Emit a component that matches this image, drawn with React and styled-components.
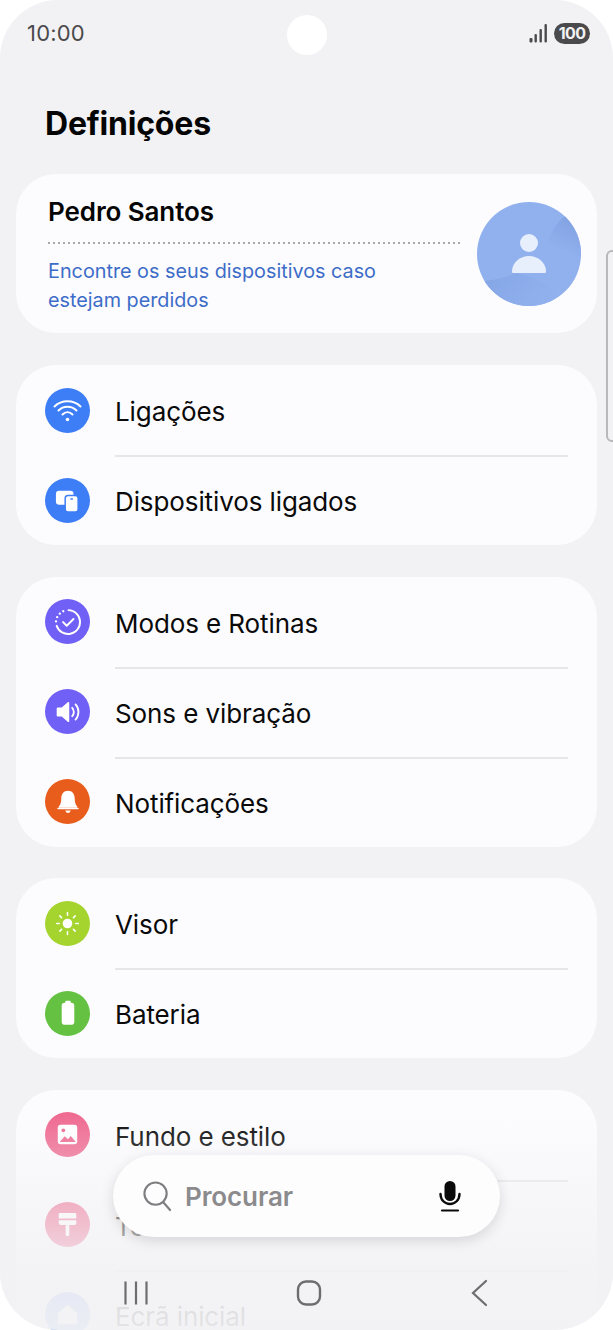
import React from "react";
import styled, { createGlobalStyle } from "styled-components";

const Global = createGlobalStyle`
  html, body { margin: 0; padding: 0; background: #fff; }
  #root { width: 613px; height: 1330px; }
  * { box-sizing: border-box; }
`;

const Screen = styled.div`
  position: relative;
  width: 613px;
  height: 1330px;
  overflow: hidden;
  background: #f2f2f4;
  border-radius: 58px;
  font-family: Inter, "Noto Sans", sans-serif;
  color: #0a0a0a;
  padding: 0 16px;
`;

const StatusBar = styled.div`
  height: 66px;
  display: flex;
  align-items: center;
  justify-content: space-between;
  padding: 0 7px 0 11px;
`;

const Clock = styled.span`
  font-size: 22px;
  color: #4a4a4c;
  letter-spacing: 0.2px;
`;

const StatusRight = styled.div`
  display: flex;
  align-items: center;
  gap: 5px;
`;

const BatteryBadge = styled.span`
  width: 36px;
  height: 21px;
  border-radius: 11px;
  background: #4a4a4c;
  color: #f2f2f4;
  font-size: 16px;
  font-weight: 700;
  letter-spacing: -0.6px;
  display: flex;
  align-items: center;
  justify-content: center;
`;

const Camera = styled.div`
  position: absolute;
  left: 287px;
  top: 15px;
  width: 40px;
  height: 40px;
  border-radius: 50%;
  background: #fff;
`;

const Title = styled.h1`
  margin: 0;
  height: 108px;
  padding: 37px 0 0 29px;
  font-size: 32px;
  line-height: 42px;
  font-weight: 700;
  letter-spacing: -0.2px;
  color: #050505;
`;

const Card = styled.section`
  background: #fcfcfe;
  border-radius: 40px;
  margin-bottom: 32.5px;
`;

const ProfileCard = styled(Card)`
  height: 159px;
  display: flex;
  align-items: center;
  padding: 0 16px 0 32px;
  margin-bottom: 33px;
`;

const ProfileText = styled.div`
  flex: 1;
  min-width: 0;
  margin-right: 17px;
  align-self: flex-start;
  margin-top: 23px;
`;

const ProfileName = styled.div`
  font-size: 26px;
  line-height: 30px;
  font-weight: 600;
  letter-spacing: -0.1px;
  color: #050505;
`;

const DottedRule = styled.div`
  height: 2px;
  margin-top: 15px;
  background: repeating-linear-gradient(to right, #a9a9ad 0 2px, transparent 2px 5px);
`;

const ProfileLink = styled.div`
  margin-top: 13px;
  font-size: 19.8px;
  line-height: 29px;
  color: #3d6cc8;
`;

const Avatar = styled.div`
  width: 104px;
  height: 104px;
  flex: none;
`;

const Row = styled.div`
  display: flex;
  align-items: center;
  height: 90px;
  padding-left: 29px;
  &:first-child {
    margin-top: -1px;
  }
`;

const IconCircle = styled.div`
  width: 45px;
  height: 45px;
  border-radius: 50%;
  background: ${(p) => p.$color};
  flex: none;
  display: flex;
  align-items: center;
  justify-content: center;
  margin-right: 25px;
`;

const RowBody = styled.div`
  flex: 1;
  align-self: stretch;
  display: flex;
  align-items: center;
  margin-right: 29px;
  font-size: 26px;
  letter-spacing: -0.1px;
  color: #0a0a0a;
  border-top: ${(p) => (p.$first ? "none" : "2px solid #e6e6e9")};
  padding-top: ${(p) => (p.$first ? 3 : 1)}px;
`;

const Fade = styled.div`
  position: absolute;
  left: 0;
  right: 0;
  bottom: 0;
  height: 215px;
  background: linear-gradient(
    to bottom,
    rgba(242, 242, 244, 0) 0%,
    rgba(242, 242, 244, 0.4) 30%,
    rgba(242, 242, 244, 0.62) 51%,
    rgba(242, 242, 244, 0.88) 72%,
    rgba(242, 242, 244, 0.94) 100%
  );
`;

const SearchPill = styled.div`
  position: absolute;
  left: 113px;
  top: 1155px;
  width: 387px;
  height: 82px;
  border-radius: 41px;
  background: #fdfdfe;
  box-shadow: 0 4px 14px rgba(0, 0, 0, 0.13);
  display: flex;
  align-items: center;
  padding: 0 38px 0 29px;
`;

const SearchText = styled.span`
  flex: 1;
  margin-left: 13px;
  font-size: 26px;
  font-weight: 600;
  letter-spacing: -0.1px;
  color: #8b8b8d;
`;

const NavBar = styled.nav`
  position: absolute;
  left: 0;
  right: 0;
  top: 1279px;
  height: 28px;
  display: flex;
  align-items: center;
  justify-content: space-between;
  padding: 0 123px 0 124px;
`;

const ScrollHandle = styled.div`
  position: absolute;
  left: 606px;
  top: 250px;
  width: 20px;
  height: 192px;
  border: 2px solid #b9b9bb;
  border-radius: 6px;
`;

const WifiIcon = () => (
  <svg width="29" height="29" viewBox="0 0 29 29" fill="none" stroke="#fff" strokeWidth="2" strokeLinecap="round">
    <path d="M1.5 10.5C8.5 3.5 20.5 3.5 27.5 10.5" />
    <path d="M5.5 14.5C10.5 9.500 18.500 9.500 23.500 14.500" />
    <path d="M9.500 18.500C12.500 15.500 16.500 15.500 19.500 18.500" />
    <circle cx="14.500" cy="23.500" r="1.800" fill="#fff" stroke="none" />
  </svg>
);

const DevicesIcon = () => (
  <svg width="25" height="25" viewBox="0 0 27 27">
    <rect x="1" y="3" width="19" height="15" rx="3.500" fill="#fff" />
    <rect x="11" y="8" width="14" height="18" rx="3" fill="#fff" stroke="#3d7df6" strokeWidth="1.600" />
    <rect x="16.500" y="11" width="3" height="1.600" rx="0.800" fill="#3d7df6" />
  </svg>
);

const RoutineIcon = () => (
  <svg width="28" height="28" viewBox="0 0 29 29" fill="none" stroke="#fff" strokeWidth="2" strokeLinecap="round" strokeLinejoin="round">
    <path d="M15 2.200A12.400 12.400 0 1 1 2.800 18.500" />
    <path d="M2.100 13.800v.1M3.300 9.400v.1M6 5.800v.1M9.600 3.300v.1" strokeWidth="2.400" />
    <path d="M9.400 14.600l3.800 3.800 7-7" />
  </svg>
);

const SoundIcon = () => (
  <svg width="26" height="26" viewBox="0 0 31 31" fill="none">
    <path d="M2 11.500c0-.8.6-1.500 1.500-1.500H8l7.500-6.300c.7-.6 1.500-.1 1.500.8v22c0 .9-.8 1.400-1.500.8L8 21H3.500C2.600 21 2 20.300 2 19.500z" fill="#fff" />
    <path d="M20.500 10.500c2.600 2.800 2.600 7.200 0 10M24.500 6.500c4.600 5 4.600 13 0 18" stroke="#fff" strokeWidth="2.200" strokeLinecap="round" />
  </svg>
);

const BellIcon = () => (
  <svg width="26" height="26" viewBox="0 0 29 29" fill="#fff">
    <path d="M14.500 2C9.500 2 7 6 7 10.500c0 4-.8 6.500-2.400 8.500-.7.900-.7 2 .6 2h18.600c1.300 0 1.300-1.100.6-2C22.800 17 22 14.500 22 10.500 22 6 19.500 2 14.500 2z" />
    <rect x="2.500" y="21" width="24" height="1.600" rx="0.800" />
    <path d="M11.500 24h6c-.5 1.900-1.700 2.800-3 2.800s-2.500-.9-3-2.800z" />
  </svg>
);

const SunIcon = () => (
  <svg width="27" height="27" viewBox="0 0 31 31" fill="none" stroke="#fff" strokeWidth="1.800" strokeLinecap="round">
    <circle cx="15.500" cy="15.500" r="5.500" fill="#fff" stroke="none" />
    <path d="M15.500 3v3M15.500 25v3M3 15.500h3M25 15.500h3M6.700 6.700l2 2M22.300 22.300l2 2M6.700 24.300l2-2M22.300 8.700l2-2" />
  </svg>
);

const BatteryIcon = () => (
  <svg width="22" height="26" viewBox="0 0 27 33" fill="#fff">
    <rect x="10" y="1" width="7" height="4" rx="1.200" />
    <rect x="5.500" y="3.500" width="16" height="28" rx="4" />
  </svg>
);

const PictureIcon = () => (
  <svg width="25" height="25" viewBox="0 0 27 27">
    <rect x="3" y="3" width="21" height="21" rx="3" fill="#fff" />
    <circle cx="9" cy="9" r="2" fill="#ef6b92" />
    <path d="M5 21.500l5.500-6 3.500 3 3-3.500 5.500 6.500z" fill="#ef6b92" />
  </svg>
);

const BrushIcon = () => (
  <svg width="25" height="27" viewBox="0 0 27 29" fill="#fff">
    <path d="M4 3.500c0-.8.700-1.500 1.500-1.500h16c.8 0 1.500.7 1.500 1.500V8H4z" />
    <path d="M4 10h19v2.500c0 1.400-1.100 2.500-2.500 2.500H6.500A2.500 2.500 0 0 1 4 12.500z" />
    <rect x="11.500" y="15" width="4" height="12" rx="1.500" />
  </svg>
);

const HomeIcon = () => (
  <svg width="25" height="25" viewBox="0 0 27 27" fill="#fff">
    <path d="M13.500 3L24 12.500V24H3V12.500z" />
  </svg>
);

const SearchIcon = () => (
  <svg width="30" height="32" viewBox="0 0 31 33" fill="none" stroke="#7e7e80" strokeWidth="2.200" strokeLinecap="round">
    <circle cx="14" cy="14" r="11.500" />
    <path d="M22 23l7 8" />
  </svg>
);

const MicIcon = () => (
  <svg width="24" height="32" viewBox="0 0 24 32" fill="none">
    <rect x="6.500" y="1" width="11" height="20" rx="5.500" fill="#0a0a0a" />
    <path d="M2.500 14c0 6 4.400 10 9.500 10s9.500-4 9.500-10" stroke="#0a0a0a" strokeWidth="2.400" strokeLinecap="round" />
    <path d="M4 30.500h16" stroke="#0a0a0a" strokeWidth="2.200" strokeLinecap="round" />
  </svg>
);

const Signal = () => (
  <svg width="20" height="20" viewBox="0 0 20 20" fill="#4a4a4c">
    <rect x="0.500" y="15" width="3" height="4.500" rx="1" />
    <rect x="5.500" y="11" width="2.400" height="8.500" rx="1" />
    <rect x="10.500" y="6" width="2.400" height="13.500" rx="1" />
    <rect x="15.500" y="1" width="2.400" height="18.500" rx="1" />
  </svg>
);

const ProfileAvatar = () => (
  <svg width="104" height="104" viewBox="0 0 104 104">
    <defs>
      <clipPath id="avatarClip">
        <circle cx="52" cy="52" r="52" />
      </clipPath>
      <linearGradient id="wedge" x1="1" y1="0" x2="0.600" y2="1">
        <stop offset="0" stopColor="#7f9fe0" />
        <stop offset="1" stopColor="#91b1ee" />
      </linearGradient>
      <linearGradient id="lower" x1="0" y1="0" x2="1" y2="0.400">
        <stop offset="0" stopColor="#84a5e5" />
        <stop offset="1" stopColor="#91b1ee" />
      </linearGradient>
    </defs>
    <g clipPath="url(#avatarClip)">
      <rect width="104" height="104" fill="#91b1ee" />
      <path d="M88 14C78 22 73 32 70 43 82 47 94 50 106 56V14z" fill="url(#wedge)" />
      <path d="M4 79C18 78 30 75 38 71 56 74 70 82 84 92L60 110H0z" fill="url(#lower)" />
      <circle cx="52" cy="41" r="9" fill="#e8effc" />
      <path d="M35 69.500c0-9 8-15.500 17-15.500s17 6.500 17 15.500c0 1-.7 1.500-1.500 1.500h-31c-.8 0-1.500-.5-1.500-1.500z" fill="#e8effc" />
    </g>
  </svg>
);

const groups = [
  [
    { label: "Ligações", color: "#3d7df6", icon: <WifiIcon /> },
    { label: "Dispositivos ligados", color: "#3d7df6", icon: <DevicesIcon /> },
  ],
  [
    { label: "Modos e Rotinas", color: "#7160f5", icon: <RoutineIcon /> },
    { label: "Sons e vibração", color: "#7160f5", icon: <SoundIcon /> },
    { label: "Notificações", color: "#e85c1c", icon: <BellIcon /> },
  ],
  [
    { label: "Visor", color: "#a5d42e", icon: <SunIcon /> },
    { label: "Bateria", color: "#64c141", icon: <BatteryIcon /> },
  ],
  [
    { label: "Fundo e estilo", color: "#ef6b92", icon: <PictureIcon /> },
    { label: "Temas", color: "#ef6b92", icon: <BrushIcon /> },
    { label: "Ecrã inicial", color: "#7a9bf0", icon: <HomeIcon /> },
  ],
];

export default function App() {
  return (
    <Screen>
      <Global />
      <StatusBar>
        <Clock>10:00</Clock>
        <StatusRight>
          <Signal />
          <BatteryBadge>100</BatteryBadge>
        </StatusRight>
      </StatusBar>
      <Camera />
      <Title>Definições</Title>
      <ProfileCard>
        <ProfileText>
          <ProfileName>Pedro Santos</ProfileName>
          <DottedRule />
          <ProfileLink>
            Encontre os seus dispositivos caso
            <br />
            estejam perdidos
          </ProfileLink>
        </ProfileText>
        <Avatar>
          <ProfileAvatar />
        </Avatar>
      </ProfileCard>
      {groups.map((rows, i) => (
        <Card key={i}>
          {rows.map((r, j) => (
            <Row key={r.label}>
              <IconCircle $color={r.color}>{r.icon}</IconCircle>
              <RowBody $first={j === 0}>{r.label}</RowBody>
            </Row>
          ))}
        </Card>
      ))}
      <ScrollHandle />
      <Fade />
      <SearchPill>
        <SearchIcon />
        <SearchText>Procurar</SearchText>
        <MicIcon />
      </SearchPill>
      <NavBar>
        <svg width="24" height="28" viewBox="0 0 24 28" stroke="#6d6d70" strokeWidth="2.200" fill="none">
          <path d="M1.500 2.500v23M12 2.500v23M22.500 2.500v23" />
        </svg>
        <svg width="26" height="28" viewBox="0 0 26 28" stroke="#6d6d70" strokeWidth="2.400" fill="none">
          <rect x="2" y="2.500" width="22" height="23" rx="8" />
        </svg>
        <svg width="20" height="28" viewBox="0 0 20 28" stroke="#6d6d70" strokeWidth="2.200" fill="none" strokeLinecap="round">
          <path d="M16 2L3 14l13 12" />
        </svg>
      </NavBar>
    </Screen>
  );
}
